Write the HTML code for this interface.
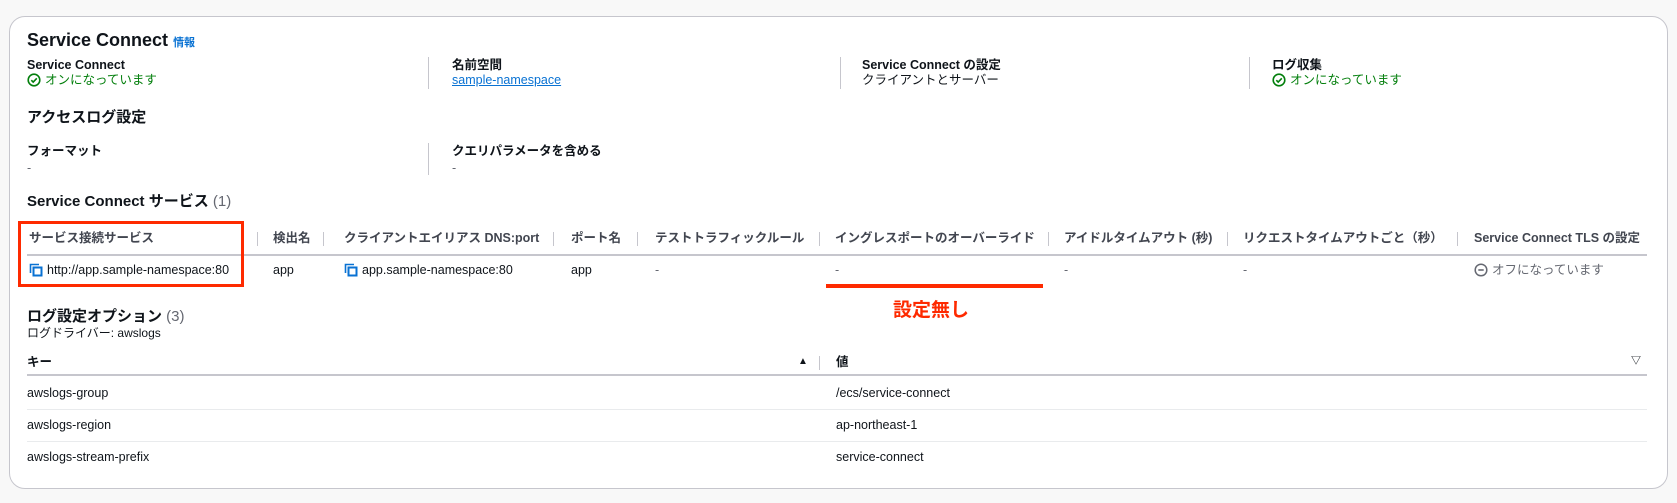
<!DOCTYPE html>
<html><head><meta charset="utf-8"><style>
*{margin:0;padding:0;box-sizing:border-box}
body{width:1677px;height:503px;background:#f8f8f8;font-family:"Liberation Sans","Noto Sans CJK JP",sans-serif;color:#0f141a;position:relative;overflow:hidden;font-size:12.5px}
.card{position:absolute;left:9px;top:16px;width:1659px;height:473px;background:#fff;border:1px solid #c6c6cd;border-radius:16px}
.t{position:absolute;white-space:nowrap;line-height:18px}
.b{font-weight:bold}
.g{color:#037f0c}
.gr{color:#656871}
.h{color:#424650}
.vd{position:absolute;width:1px;background:#c6c6cd}
.hl{position:absolute;height:1px;background:#c6c6cd}
.rl{position:absolute;height:1px;background:#e9ebed}
a{color:#0972d3}
.ic{display:inline-block;vertical-align:-3px;margin-right:4px}
</style></head><body>
<div class="card"></div>
<div class="t b" style="left:27px;top:29px;font-size:18px;line-height:22px">Service Connect <span style="font-size:11px;color:#0972d3;font-weight:bold">情報</span></div>

<div class="t b" style="left:27px;top:56px">Service Connect</div>
<div class="t g" style="left:27px;top:71px"><svg class="ic" width="14" height="14" viewBox="0 0 14 14"><circle cx="7" cy="7" r="5.8" fill="none" stroke="#037f0c" stroke-width="1.6"/><path d="M4.3 7.2l1.9 1.9 3.6-3.8" fill="none" stroke="#037f0c" stroke-width="1.6"/></svg>オンになっています</div>
<div class="vd" style="left:428px;top:57px;height:32px"></div>
<div class="t b" style="left:452px;top:56px">名前空間</div>
<div class="t" style="left:452px;top:71px"><a style="text-decoration:underline">sample-namespace</a></div>
<div class="vd" style="left:840px;top:57px;height:32px"></div>
<div class="t b" style="left:862px;top:56px">Service Connect の設定</div>
<div class="t" style="left:862px;top:71px">クライアントとサーバー</div>
<div class="vd" style="left:1249px;top:57px;height:32px"></div>
<div class="t b" style="left:1272px;top:56px">ログ収集</div>
<div class="t g" style="left:1272px;top:71px"><svg class="ic" width="14" height="14" viewBox="0 0 14 14"><circle cx="7" cy="7" r="5.8" fill="none" stroke="#037f0c" stroke-width="1.6"/><path d="M4.3 7.2l1.9 1.9 3.6-3.8" fill="none" stroke="#037f0c" stroke-width="1.6"/></svg>オンになっています</div>

<div class="t b" style="left:27px;top:107px;font-size:15px;line-height:22px">アクセスログ設定</div>
<div class="t b" style="left:27px;top:142px">フォーマット</div>
<div class="t gr" style="left:27px;top:159px">-</div>
<div class="vd" style="left:428px;top:143px;height:32px"></div>
<div class="t b" style="left:452px;top:142px">クエリパラメータを含める</div>
<div class="t gr" style="left:452px;top:159px">-</div>

<div class="t b" style="left:27px;top:191px;font-size:15px;line-height:22px">Service Connect サービス <span style="font-weight:normal;color:#656871">(1)</span></div>

<div class="t b h" style="left:29px;top:229px">サービス接続サービス</div>
<div class="vd" style="left:257px;top:232px;height:14px"></div>
<div class="t b h" style="left:273px;top:229px">検出名</div>
<div class="vd" style="left:323px;top:232px;height:14px"></div>
<div class="t b h" style="left:344px;top:229px">クライアントエイリアス DNS:port</div>
<div class="vd" style="left:553px;top:232px;height:14px"></div>
<div class="t b h" style="left:571px;top:229px">ポート名</div>
<div class="vd" style="left:637px;top:232px;height:14px"></div>
<div class="t b h" style="left:655px;top:229px">テストトラフィックルール</div>
<div class="vd" style="left:819px;top:232px;height:14px"></div>
<div class="t b h" style="left:835px;top:229px">イングレスポートのオーバーライド</div>
<div class="vd" style="left:1048px;top:232px;height:14px"></div>
<div class="t b h" style="left:1064px;top:229px">アイドルタイムアウト (秒)</div>
<div class="vd" style="left:1227px;top:232px;height:14px"></div>
<div class="t b h" style="left:1243px;top:229px">リクエストタイムアウトごと（秒）</div>
<div class="vd" style="left:1457px;top:232px;height:14px"></div>
<div class="t b h" style="left:1474px;top:229px">Service Connect TLS の設定</div>
<div class="hl" style="left:27px;top:254px;width:1620px;height:2px"></div>

<div class="t" style="left:29px;top:261px"><svg class="ic" width="14" height="14" viewBox="0 0 14 14"><path d="M1.5 10V1.5H10" fill="none" stroke="#0972d3" stroke-width="1.6"/><rect x="4.5" y="4.5" width="8" height="8" fill="none" stroke="#0972d3" stroke-width="2"/></svg>http://app.sample-namespace:80</div>
<div class="t" style="left:273px;top:261px">app</div>
<div class="t" style="left:344px;top:261px"><svg class="ic" width="14" height="14" viewBox="0 0 14 14"><path d="M1.5 10V1.5H10" fill="none" stroke="#0972d3" stroke-width="1.6"/><rect x="4.5" y="4.5" width="8" height="8" fill="none" stroke="#0972d3" stroke-width="2"/></svg>app.sample-namespace:80</div>
<div class="t" style="left:571px;top:261px">app</div>
<div class="t gr" style="left:655px;top:261px">-</div>
<div class="t gr" style="left:835px;top:261px">-</div>
<div class="t gr" style="left:1064px;top:261px">-</div>
<div class="t gr" style="left:1243px;top:261px">-</div>
<div class="t gr" style="left:1474px;top:261px"><svg class="ic" width="14" height="14" viewBox="0 0 14 14"><circle cx="7" cy="7" r="5.8" fill="none" stroke="#656871" stroke-width="1.5"/><path d="M4.3 7h5.4" stroke="#656871" stroke-width="1.6"/></svg>オフになっています</div>

<div style="position:absolute;left:18px;top:221px;width:226px;height:66px;border:3px solid #fe2a00"></div>
<div style="position:absolute;left:826px;top:284px;width:217px;height:4px;background:#fe2a00"></div>
<div class="t b" style="left:893px;top:299px;font-size:19px;line-height:24px;color:#fe2a00">設定無し</div>

<div class="t b" style="left:27px;top:306px;font-size:15px;line-height:22px">ログ設定オプション <span style="font-weight:normal;color:#656871">(3)</span></div>
<div class="t" style="left:27px;top:325px;font-size:12px;line-height:16px">ログドライバー: awslogs</div>

<div class="t b" style="left:27px;top:353px">キー</div>
<div class="t" style="left:798px;top:353px;font-size:10px">▲</div>
<div class="vd" style="left:819px;top:356px;height:14px"></div>
<div class="t b" style="left:836px;top:353px">値</div>
<div class="t b" style="left:1631px;top:353px;font-size:10px">▽</div>
<div class="hl" style="left:27px;top:374px;width:1620px;height:2px"></div>
<div class="t" style="left:27px;top:384px">awslogs-group</div>
<div class="t" style="left:836px;top:384px">/ecs/service-connect</div>
<div class="rl" style="left:27px;top:409px;width:1620px"></div>
<div class="t" style="left:27px;top:416px">awslogs-region</div>
<div class="t" style="left:836px;top:416px">ap-northeast-1</div>
<div class="rl" style="left:27px;top:441px;width:1620px"></div>
<div class="t" style="left:27px;top:448px">awslogs-stream-prefix</div>
<div class="t" style="left:836px;top:448px">service-connect</div>
</body></html>
